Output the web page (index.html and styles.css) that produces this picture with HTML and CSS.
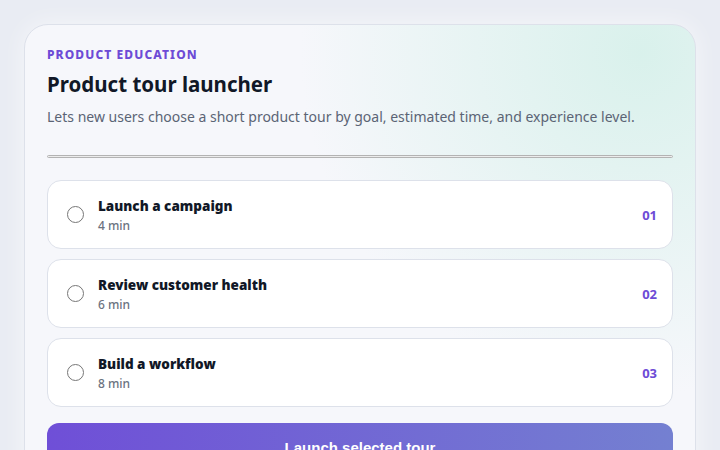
FILE: index.html
```html
<!DOCTYPE html>
<html lang="en">
<head>
    <meta charset="UTF-8">
    <meta name="viewport" content="width=device-width, initial-scale=1.0">
    <title>Product tour launcher</title>
    <link rel="stylesheet" href="styles.css">
</head>
<body>
    <div class="page">
        <div class="card">
            <div class="eyebrow">PRODUCT EDUCATION</div>
            <h1>Product tour launcher</h1>
            <p class="lead">Lets new users choose a short product tour by goal, estimated time, and experience level.</p>
            <hr class="divider">

            <div class="tours">
                <label class="tour">
                    <input type="radio" name="tour" value="campaign">
                    <span class="tour-text">
                        <span class="tour-name">Launch a campaign</span>
                        <span class="tour-time">4 min</span>
                    </span>
                    <span class="tour-num">01</span>
                </label>
                <label class="tour">
                    <input type="radio" name="tour" value="health">
                    <span class="tour-text">
                        <span class="tour-name">Review customer health</span>
                        <span class="tour-time">6 min</span>
                    </span>
                    <span class="tour-num">02</span>
                </label>
                <label class="tour">
                    <input type="radio" name="tour" value="workflow">
                    <span class="tour-text">
                        <span class="tour-name">Build a workflow</span>
                        <span class="tour-time">8 min</span>
                    </span>
                    <span class="tour-num">03</span>
                </label>
            </div>

            <button class="btn">Launch selected tour</button>
        </div>
    </div>
</body>
</html>
```

FILE: styles.css
```css
body {
    font-family: "Noto Sans", "Open Sans", sans-serif;
    background-color: #e9ecf3;
    margin: 0;
    padding: 0;
}

.page {
    padding: 24px;
}

.card {
    padding: 22px;
    border: 1px solid #dde1ea;
    border-radius: 24px;
    background:
        radial-gradient(circle at 92% 6%, rgba(212, 240, 233, 0.85), rgba(212, 240, 233, 0) 45%),
        #f6f7fb;
    box-shadow: 0 0 24px rgba(255, 255, 255, 0.6);
}

.eyebrow {
    color: #6d4bd6;
    font-size: 12px;
    font-weight: 800;
    letter-spacing: 1.1px;
    line-height: 16px;
}

h1 {
    margin: 6px 0 0;
    color: #111827;
    font-size: 20.5px;
    font-weight: 700;
    line-height: 30px;
}

.lead {
    margin: 8px 0 0;
    color: #5b6475;
    font-size: 14px;
    line-height: 20px;
}

.divider {
    margin: 28px 0 22px;
    height: 1px;
    border: 1px solid #b3b3b3;
    border-radius: 3px;
    background-color: #ececec;
}

.tours {
    display: flex;
    flex-direction: column;
    gap: 10px;
}

.tour {
    display: flex;
    align-items: center;
    height: 67px;
    padding: 0 15px 0 19px;
    border: 1px solid #dde1ea;
    border-radius: 14px;
    background-color: #fff;
    cursor: pointer;
}

.tour input {
    width: 17px;
    height: 17px;
    margin: 0 14px 0 0;
}

.tour-text {
    display: flex;
    flex-direction: column;
    flex: 1;
    padding-top: 2px;
}

.tour-name {
    color: #111827;
    font-size: 13.5px;
    font-weight: 900;
    line-height: 20px;
}

.tour-time {
    margin-top: 1px;
    color: #6b7280;
    font-size: 12px;
    font-weight: 500;
    line-height: 18px;
}

.tour-num {
    color: #6d4bd6;
    font-size: 13px;
    font-weight: 700;
}

.btn {
    display: block;
    width: 100%;
    margin-top: 16px;
    padding: 16px 15px;
    border: none;
    border-radius: 12px;
    background: linear-gradient(90deg, #6f4fd7, #7480d1);
    color: white;
    font-family: "Liberation Sans", sans-serif;
    font-size: 15px;
    font-weight: 700;
    cursor: pointer;
}
```
